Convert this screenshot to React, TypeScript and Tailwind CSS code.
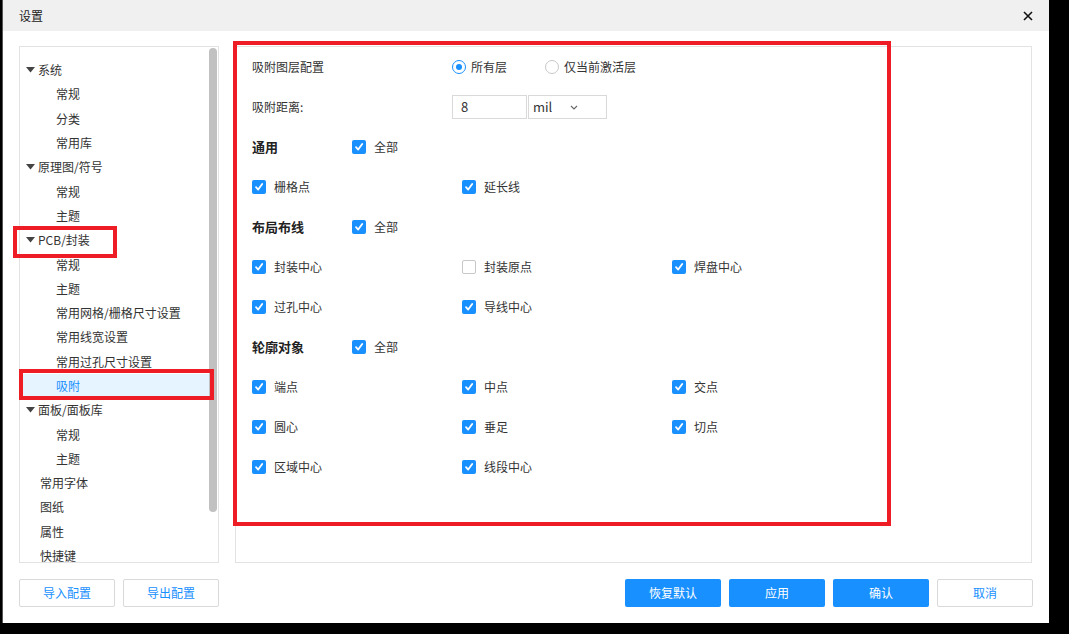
import React from "react";

type TreeRow = { label: string; level: 0 | 1 | 2; arrow?: boolean; active?: boolean };

const tree: TreeRow[] = [
  { label: "系统", level: 0, arrow: true },
  { label: "常规", level: 2 },
  { label: "分类", level: 2 },
  { label: "常用库", level: 2 },
  { label: "原理图/符号", level: 0, arrow: true },
  { label: "常规", level: 2 },
  { label: "主题", level: 2 },
  { label: "PCB/封装", level: 0, arrow: true },
  { label: "常规", level: 2 },
  { label: "主题", level: 2 },
  { label: "常用网格/栅格尺寸设置", level: 2 },
  { label: "常用线宽设置", level: 2 },
  { label: "常用过孔尺寸设置", level: 2 },
  { label: "吸附", level: 2, active: true },
  { label: "面板/面板库", level: 0, arrow: true },
  { label: "常规", level: 2 },
  { label: "主题", level: 2 },
  { label: "常用字体", level: 1 },
  { label: "图纸", level: 1 },
  { label: "属性", level: 1 },
  { label: "快捷键", level: 1 },
];

const font = { fontFamily: '"Noto Sans CJK SC", "Noto Sans", sans-serif' };

function Check({ checked = true }: { checked?: boolean }) {
  return checked ? (
    <span className="flex h-[14px] w-[14px] items-center justify-center rounded-[2px] bg-[#1890ff]">
      <svg width="10" height="10" viewBox="0 0 10 10">
        <path d="M2 5.2 L4.2 7.6 L8.2 2" fill="none" stroke="white" strokeWidth="1.8" strokeLinecap="round" strokeLinejoin="round" />
      </svg>
    </span>
  ) : (
    <span className="h-[14px] w-[14px] rounded-[2px] border border-[#c8c8c8] bg-white" />
  );
}

function Item({ label, checked = true }: { label: string; checked?: boolean }) {
  return (
    <div className="flex w-[210px] items-center gap-2">
      <Check checked={checked} />
      <span>{label}</span>
    </div>
  );
}

function Section({ title }: { title: string }) {
  return (
    <div className="flex h-[40px] items-center">
      <span className="w-[100px] text-[13px] font-bold text-[#222]">{title}</span>
      <Item label="全部" />
    </div>
  );
}

function Row({ items }: { items: [string, boolean?][] }) {
  return (
    <div className="flex h-[40px] items-center">
      {items.map(([l, c], i) => (
        <Item key={i} label={l} checked={c !== false} />
      ))}
    </div>
  );
}

export default function App() {
  return (
    <div className="relative h-[634px] w-[1069px] overflow-hidden bg-black text-[12px] text-[#333]" style={font}>
      <div className="ml-[2px] flex h-[623px] w-[1047px] flex-col border-l border-[#555] bg-white">
        {/* title bar */}
        <div className="flex h-[31px] items-center justify-between bg-[#f0f0f0] pl-[16px] pr-[16px]">
          <span className="text-[12px] text-[#222]">设置</span>
          <svg width="10" height="10" viewBox="0 0 10 10">
            <path d="M1 1 L9 9 M9 1 L1 9" stroke="#111" strokeWidth="1.6" />
          </svg>
        </div>

        <div className="flex gap-[16px] pl-[16px] pt-[15px]">
          {/* tree */}
          <div className="relative h-[517px] w-[200px] border border-[#e3e3e3]">
            <div className="flex flex-col pt-[11px]">
              {tree.map((r, i) => (
                <div
                  key={i}
                  className={
                    "flex h-[24.3px] items-center " +
                    (r.active ? "mx-[2px] bg-[#e6f4ff] text-[#1890ff]" : "")
                  }
                >
                  {r.level === 0 && (
                    <>
                      <svg className="ml-[6px] mr-[3px]" width="9" height="6" viewBox="0 0 9 6">
                        <path d="M0 0 H9 L4.5 5.5 Z" fill="#444" />
                      </svg>
                      <span>{r.label}</span>
                    </>
                  )}
                  {r.level === 1 && <span className="ml-[20px]">{r.label}</span>}
                  {r.level === 2 && <span className={r.active ? "ml-[34px]" : "ml-[36px]"}>{r.label}</span>}
                </div>
              ))}
            </div>
            <div className="absolute right-[1px] top-[1px] h-[464px] w-[8px] rounded-[4px] bg-[#c1c1c1]" />
          </div>

          {/* settings */}
          <div className="h-[517px] w-[797px] border border-[#e3e3e3] pl-[16px]">
            <div className="flex h-[40px] items-center">
              <span className="w-[200px]">吸附图层配置</span>
              <div className="flex w-[93px] items-center gap-[5px]">
                <span className="flex h-[14px] w-[14px] items-center justify-center rounded-full border border-[#1890ff]">
                  <span className="h-[6px] w-[6px] rounded-full bg-[#1890ff]" />
                </span>
                <span>所有层</span>
              </div>
              <div className="flex items-center gap-[5px]">
                <span className="h-[14px] w-[14px] rounded-full border border-[#c8c8c8]" />
                <span>仅当前激活层</span>
              </div>
            </div>
            <div className="flex h-[40px] items-center">
              <span className="w-[200px]">吸附距离:</span>
              <div className="flex h-[24px] w-[75px] items-center border border-[#d9d9d9] pl-[8px] text-[13px]">8</div>
              <div className="ml-[1px] flex h-[24px] w-[79px] items-center justify-between border border-[#d9d9d9] pl-[4px] pr-[28px] text-[13px]">
                <span>mil</span>
                <svg width="8" height="5" viewBox="0 0 8 5">
                  <path d="M1 1 L4 4 L7 1" fill="none" stroke="#666" strokeWidth="1.1" />
                </svg>
              </div>
            </div>
            <Section title="通用" />
            <Row items={[["栅格点"], ["延长线"]]} />
            <Section title="布局布线" />
            <Row items={[["封装中心"], ["封装原点", false], ["焊盘中心"]]} />
            <Row items={[["过孔中心"], ["导线中心"]]} />
            <Section title="轮廓对象" />
            <Row items={[["端点"], ["中点"], ["交点"]]} />
            <Row items={[["圆心"], ["垂足"], ["切点"]]} />
            <Row items={[["区域中心"], ["线段中心"]]} />
          </div>
        </div>

        {/* footer buttons */}
        <div className="flex items-center justify-between pl-[16px] pr-[16px] pt-[16px]">
          <div className="flex gap-[8px]">
            <button className="h-[28px] w-[96px] rounded-[2px] border border-[#d9d9d9] bg-white text-[#1890ff]">导入配置</button>
            <button className="h-[28px] w-[96px] rounded-[2px] border border-[#d9d9d9] bg-white text-[#1890ff]">导出配置</button>
          </div>
          <div className="flex gap-[8px]">
            <button className="h-[28px] w-[96px] rounded-[2px] bg-[#1890ff] text-white">恢复默认</button>
            <button className="h-[28px] w-[96px] rounded-[2px] bg-[#1890ff] text-white">应用</button>
            <button className="h-[28px] w-[96px] rounded-[2px] bg-[#1890ff] text-white">确认</button>
            <button className="h-[28px] w-[96px] rounded-[2px] border border-[#d9d9d9] bg-white text-[#1890ff]">取消</button>
          </div>
        </div>
      </div>

      {/* red annotation boxes */}
      <div className="absolute left-[233px] top-[41px] h-[485px] w-[658px] border-[4px] border-[#ee1c25]" />
      <div className="absolute left-[13px] top-[226px] h-[32px] w-[104px] border-[4px] border-[#ee1c25]" />
      <div className="absolute left-[19px] top-[369px] h-[31px] w-[195px] border-[4px] border-[#ee1c25]" />
    </div>
  );
}
